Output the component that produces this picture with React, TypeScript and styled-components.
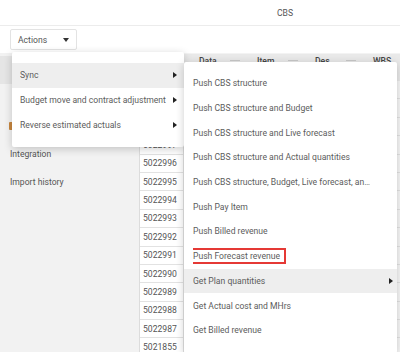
import React from 'react';
import styled, { createGlobalStyle } from 'styled-components';

const GlobalStyle = createGlobalStyle`
  html, body {
    margin: 0;
    padding: 0;
    background: #ffffff;
    font-family: Roboto, "Liberation Sans", Arial, sans-serif;
    font-size: 8.6px;
    color: #5c5c5c;
  }
`;

const Page = styled.div`
  position: relative;
  width: 400px;
  height: 352px;
  overflow: hidden;
  display: flex;
  flex-direction: column;
`;

const TopBar = styled.div`
  height: 25px;
  border-bottom: 1px solid #ececec;
  display: flex;
  align-items: center;
  justify-content: center;
  padding-left: 170px;
  color: #555;
`;

const Toolbar = styled.div`
  height: 27px;
  box-sizing: border-box;
  padding: 3px 0 0 10px;
  display: flex;
  align-items: flex-start;
`;

const ActionsButton = styled.button`
  height: 21px;
  width: 67px;
  box-sizing: border-box;
  border: 1px solid #e3e3e3;
  background: #fff;
  border-radius: 2px;
  display: flex;
  align-items: center;
  justify-content: space-between;
  padding: 0 7px 0 7px;
  font: inherit;
  color: #555;
`;

const Caret = styled.span`
  width: 0;
  height: 0;
  border-left: 3.5px solid transparent;
  border-right: 3.5px solid transparent;
  border-top: 4px solid #333;
`;

const Body = styled.div`
  flex: 1;
  display: grid;
  grid-template-columns: 140px 1fr;
  min-height: 0;
`;

const Sidebar = styled.div`
  background: #f2f2f2;
  padding-top: 3px;
`;

const NavItem = styled.div<{ $active?: boolean }>`
  height: 28px;
  display: flex;
  align-items: center;
  padding-left: 10px;
  background: ${(p) => (p.$active ? '#e5e5e5' : 'transparent')};
  color: #555;
`;

const WarnIcon = styled.span`
  width: 4px;
  height: 8px;
  margin-left: -1px;
  border-radius: 1px;
  background: #c8873f;
`;

const Table = styled.div`
  border-left: 1px solid #dcdcdc;
  margin-left: -1px;
  background: #f7f7f7;
`;

const HeaderRow = styled.div`
  height: 28px;
  display: grid;
  grid-template-columns: 44px repeat(4, 58px);
  background: #e9e9e9;
  border-top: 1px solid #f3f3f3;
  box-sizing: border-box;
  font-weight: 500;
  color: #444;
`;

const HeaderCell = styled.div`
  position: relative;
  padding: 1px 0 0 15px;
  line-height: 12px;
  &::after {
    content: '';
    position: absolute;
    right: 2px;
    top: 6px;
    width: 10px;
    height: 1px;
    background: #c8c8c8;
  }
`;

const Row = styled.div`
  height: 18.4px;
  display: grid;
  grid-template-columns: 44px 1fr;
  box-sizing: border-box;
  border-bottom: 1px solid #e2e2e2;
`;

const IdCell = styled.div`
  background: #fff;
  padding-left: 3px;
  display: flex;
  align-items: center;
  color: #555;
  border-right: 1px solid #e2e2e2;
`;

const Menu = styled.div<{ $left: number; $top: number; $width: number; $padTop: number }>`
  position: absolute;
  left: ${(p) => p.$left}px;
  top: ${(p) => p.$top}px;
  width: ${(p) => p.$width}px;
  box-sizing: border-box;
  padding: ${(p) => p.$padTop}px 0 10px 0;
  background: #fff;
  box-shadow: 0 2px 9px rgba(0, 0, 0, 0.2);
  border-radius: 2px;
`;

const MenuItem = styled.div<{ $hover?: boolean; $padLeft: number; $padRight: number }>`
  height: 24.7px;
  display: flex;
  align-items: center;
  padding: 0 ${(p) => p.$padRight}px 0 ${(p) => p.$padLeft}px;
  background: ${(p) => (p.$hover ? '#eeeeee' : 'transparent')};
  color: #5c5c5c;
`;

const Label = styled.span`
  flex: 1;
  min-width: 0;
  white-space: nowrap;
  overflow: hidden;
  text-overflow: ellipsis;
`;

const Arrow = styled.span<{ $show: boolean; $gap: number }>`
  flex: none;
  margin-left: ${(p) => p.$gap}px;
  width: 0;
  height: 0;
  border-top: 3px solid transparent;
  border-bottom: 3px solid transparent;
  border-left: 4px solid #222;
  visibility: ${(p) => (p.$show ? 'visible' : 'hidden')};
`;

const Marked = styled.span`
  display: inline-block;
  margin-left: -6px;
  padding: 1px 4px;
  line-height: 10px;
  border: 2px solid #e53935;
`;

// the first three rows sit fully under the open menu
const ids = [
  '', '', '', '5022997', '5022996', '5022995', '5022994', '5022993',
  '5022992', '5022991', '5022990', '5022989', '5022988', '5022987', '5021855',
];

const mainMenu = [
  { label: 'Sync', sub: true, hover: true },
  { label: 'Budget move and contract adjustment', sub: true },
  { label: 'Reverse estimated actuals', sub: true },
];

const syncMenu = [
  { label: 'Push CBS structure' },
  { label: 'Push CBS structure and Budget' },
  { label: 'Push CBS structure and Live forecast' },
  { label: 'Push CBS structure and Actual quantities' },
  { label: 'Push CBS structure, Budget, Live forecast, and Actual quantities' },
  { label: 'Push Pay Item' },
  { label: 'Push Billed revenue' },
  { label: 'Push Forecast revenue', marked: true },
  { label: 'Get Plan quantities', sub: true, hover: true },
  { label: 'Get Actual cost and MHrs' },
  { label: 'Get Billed revenue' },
];

export default function App() {
  return (
    <Page>
      <GlobalStyle />
      <TopBar>CBS</TopBar>
      <Toolbar>
        <ActionsButton>
          Actions
          <Caret />
        </ActionsButton>
      </Toolbar>
      <Body>
        <Sidebar>
          <NavItem $active />
          <NavItem />
          <NavItem>
            <WarnIcon />
          </NavItem>
          <NavItem>Integration</NavItem>
          <NavItem>Import history</NavItem>
        </Sidebar>
        <Table>
          <HeaderRow>
            <HeaderCell />
            <HeaderCell>Data</HeaderCell>
            <HeaderCell>Item</HeaderCell>
            <HeaderCell>Des...</HeaderCell>
            <HeaderCell>WBS</HeaderCell>
          </HeaderRow>
          {ids.map((id, i) => (
            <Row key={i}>
              <IdCell>{id}</IdCell>
              <div />
            </Row>
          ))}
        </Table>
      </Body>

      <Menu $left={12} $top={52} $width={172} $padTop={11}>
        {mainMenu.map((m) => (
          <MenuItem key={m.label} $hover={m.hover} $padLeft={8} $padRight={7}>
            <Label>{m.label}</Label>
            <Arrow $show={!!m.sub} $gap={4} />
          </MenuItem>
        ))}
      </Menu>

      <Menu $left={184} $top={62} $width={213} $padTop={9}>
        {syncMenu.map((m) => (
          <MenuItem key={m.label} $hover={m.hover} $padLeft={9} $padRight={4}>
            <Label>{m.marked ? <Marked>{m.label}</Marked> : m.label}</Label>
            <Arrow $show={!!m.sub} $gap={17} />
          </MenuItem>
        ))}
      </Menu>
    </Page>
  );
}
